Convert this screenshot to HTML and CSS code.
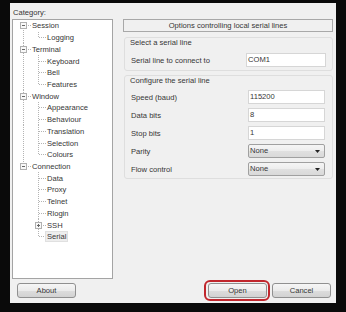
FILE: index.html
```html
<!DOCTYPE html>
<html lang="en">
<head>
  <meta charset="UTF-8" />
  <title>PuTTY Configuration - Serial</title>
  <link rel="stylesheet" href="styles.css">
</head>
<body>
  <div class="dialog">
    <div class="main">
      <div class="left">
        <div class="cat-label">Category:</div>
        <div class="tree">
          <div class="node"><span class="cell root first"><span class="exp minus"></span></span><span class="name">Session</span></div>
          <div class="node"><span class="cell v"></span><span class="cell l"></span><span class="name">Logging</span></div>
          <div class="node"><span class="cell root mid"><span class="exp minus"></span></span><span class="name">Terminal</span></div>
          <div class="node"><span class="cell v"></span><span class="cell t"></span><span class="name">Keyboard</span></div>
          <div class="node"><span class="cell v"></span><span class="cell t"></span><span class="name">Bell</span></div>
          <div class="node"><span class="cell v"></span><span class="cell l"></span><span class="name">Features</span></div>
          <div class="node"><span class="cell root mid"><span class="exp minus"></span></span><span class="name">Window</span></div>
          <div class="node"><span class="cell v"></span><span class="cell t"></span><span class="name">Appearance</span></div>
          <div class="node"><span class="cell v"></span><span class="cell t"></span><span class="name">Behaviour</span></div>
          <div class="node"><span class="cell v"></span><span class="cell t"></span><span class="name">Translation</span></div>
          <div class="node"><span class="cell v"></span><span class="cell t"></span><span class="name">Selection</span></div>
          <div class="node"><span class="cell v"></span><span class="cell l"></span><span class="name">Colours</span></div>
          <div class="node"><span class="cell root last"><span class="exp minus"></span></span><span class="name">Connection</span></div>
          <div class="node"><span class="cell"></span><span class="cell t"></span><span class="name">Data</span></div>
          <div class="node"><span class="cell"></span><span class="cell t"></span><span class="name">Proxy</span></div>
          <div class="node"><span class="cell"></span><span class="cell t"></span><span class="name">Telnet</span></div>
          <div class="node"><span class="cell"></span><span class="cell t"></span><span class="name">Rlogin</span></div>
          <div class="node"><span class="cell"></span><span class="cell t"><span class="exp plus"></span></span><span class="name">SSH</span></div>
          <div class="node"><span class="cell"></span><span class="cell l"></span><span class="name sel">Serial</span></div>
        </div>
      </div>

      <div class="right">
        <div class="panel-title">Options controlling local serial lines</div>

        <div class="group g1">
          <div class="group-title">Select a serial line</div>
          <div class="field"><span>Serial line to connect to</span><span class="edit wide">COM1</span></div>
        </div>

        <div class="group g2">
          <div class="group-title">Configure the serial line</div>
          <div class="field"><span>Speed (baud)</span><span class="edit">115200</span></div>
          <div class="field"><span>Data bits</span><span class="edit">8</span></div>
          <div class="field"><span>Stop bits</span><span class="edit">1</span></div>
          <div class="field"><span>Parity</span><span class="combo">None<svg width="5" height="3" viewBox="0 0 5 3"><path d="M0 0h5L2.5 3z" fill="#222"/></svg></span></div>
          <div class="field"><span>Flow control</span><span class="combo">None<svg width="5" height="3" viewBox="0 0 5 3"><path d="M0 0h5L2.5 3z" fill="#222"/></svg></span></div>
        </div>
      </div>
    </div>

    <div class="buttons">
      <button class="btn about">About</button>
      <span class="ring"><button class="btn">Open</button></span>
      <button class="btn cancel">Cancel</button>
    </div>
  </div>
</body>
</html>
```

FILE: styles.css
```css
* {
  box-sizing: border-box;
  margin: 0;
  padding: 0;
}

body {
  background-color: #0a0a0a;
  font-family: "Liberation Sans", Arial, sans-serif;
  font-size: 7.6px;
  color: #363636;
}

.dialog {
  width: 326px;
  height: 300px;
  margin: 3px 0 0 10px;
  padding: 4px 3px 2px 2px;
  background-color: #f0f0f0;
  display: flex;
  flex-direction: column;
}

.main {
  display: flex;
}

.left {
  width: 101px;
}

.cat-label {
  height: 12px;
  line-height: 12px;
  padding-left: 1px;
}

.tree {
  height: 260px;
  background-color: white;
  border: 1px solid #a4a4a4;
  padding-left: 3px;
}

.node {
  display: flex;
  align-items: center;
  height: 11.72px;
  line-height: 11px;
}

/* dotted tree lines */
.cell {
  width: 15px;
  height: 100%;
  flex: none;
  display: flex;
  align-items: center;
}

.cell.v {
  background: repeating-linear-gradient(to bottom, #b4b4b4 0 1px, transparent 1px 2px) 7px 0 / 1px 100% no-repeat;
}

.cell.t,
.cell.root.mid {
  background:
    repeating-linear-gradient(to right, #b4b4b4 0 1px, transparent 1px 2px) 8px 50% / 7px 1px no-repeat,
    repeating-linear-gradient(to bottom, #b4b4b4 0 1px, transparent 1px 2px) 7px 0 / 1px 100% no-repeat;
}

.cell.l,
.cell.root.last {
  background:
    repeating-linear-gradient(to right, #b4b4b4 0 1px, transparent 1px 2px) 8px 50% / 7px 1px no-repeat,
    repeating-linear-gradient(to bottom, #b4b4b4 0 1px, transparent 1px 2px) 7px 0 / 1px 50% no-repeat;
}

.cell.root.first {
  background:
    repeating-linear-gradient(to right, #b4b4b4 0 1px, transparent 1px 2px) 8px 50% / 7px 1px no-repeat,
    repeating-linear-gradient(to bottom, #b4b4b4 0 1px, transparent 1px 2px) 7px 100% / 1px 50% no-repeat;
}

.exp {
  width: 7px;
  height: 7px;
  margin-left: 4px;
  border: 1px solid #b0b0b0;
  background-color: #fafafa;
}

.exp.minus {
  background: linear-gradient(#666, #666) center / 3px 1px no-repeat, #f8f8f8;
}

.exp.plus {
  background:
    linear-gradient(#666, #666) center / 3px 1px no-repeat,
    linear-gradient(#666, #666) center / 1px 3px no-repeat,
    #f8f8f8;
}

.name {
  margin-left: 1px;
  white-space: nowrap;
}

.name.sel {
  margin-left: -1px;
  padding: 0 1px;
  line-height: 9px;
  border: 1px solid #e0e0e0;
  background-color: #eeeeee;
}

.right {
  width: 210px;
  margin-left: 10px;
  padding-top: 12px;
}

.panel-title {
  height: 13px;
  line-height: 11px;
  border: 1px solid #a8a8a8;
  text-align: center;
}

.group {
  margin-left: 1px;
  border: 1px solid #dedede;
  border-radius: 3px;
  padding: 0 6px 0 6px;
}

.g1 {
  margin-top: 5px;
  padding-bottom: 3px;
}

.g2 {
  margin-top: 4px;
  padding-bottom: 2px;
}

.group-title {
  height: 10px;
  line-height: 10px;
  margin-left: -1px;
}

.field {
  display: flex;
  justify-content: space-between;
  align-items: center;
  height: 14px;
  margin-top: 4px;
}

.g1 .field {
  margin-top: 5px;
}

.edit {
  width: 77px;
  height: 14px;
  line-height: 12px;
  margin-right: 1px;
  padding-left: 1px;
  background-color: white;
  border: 1px solid #d6d6d6;
}

.edit.wide {
  width: 80px;
  margin-right: 0;
}

.combo {
  width: 77px;
  height: 14px;
  margin-right: 1px;
  padding: 0 4px 0 1px;
  line-height: 12px;
  display: flex;
  justify-content: space-between;
  align-items: center;
  border: 1px solid #a0a0a0;
  border-radius: 2px;
  background: linear-gradient(#f5f5f5 0%, #ededed 50%, #e0e0e0 51%, #d9d9d9 100%);
}

.buttons {
  display: flex;
  align-items: center;
  height: 21px;
  margin-top: 1px;
  padding-right: 2px;
}

.btn {
  width: 59px;
  height: 15px;
  font-family: inherit;
  font-size: inherit;
  color: #363636;
  line-height: 13px;
  border: 1px solid #909090;
  border-radius: 3px;
  background: linear-gradient(#f6f6f6 0%, #ebebeb 50%, #dddddd 51%, #d2d2d2 100%);
}

.about {
  margin-left: 5px;
}

.ring {
  display: flex;
  margin-left: auto;
  padding: 1px 1px 1px 2px;
  border: 2px solid #c1272d;
  border-radius: 6px;
}

.cancel {
  margin-left: 2px;
}
```
